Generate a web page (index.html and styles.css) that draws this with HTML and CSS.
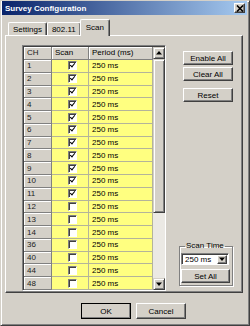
FILE: index.html
```html
<!DOCTYPE html>
<html lang="en">
<head>
  <meta charset="UTF-8" />
  <title>Survey Configuration</title>
  <link rel="stylesheet" href="styles.css">
</head>
<body>

  <div class="window">
    <div class="titlebar">
      <span>Survey Configuration</span>
      <div class="close">
        <svg width="8" height="7" viewBox="0 0 8 7"><path d="M1 0.5 L7 6.5 M7 0.5 L1 6.5" stroke="#000" stroke-width="1.6"/></svg>
      </div>
    </div>

    <div class="tabs">
      <div class="tab">Settings</div>
      <div class="tab">802.11</div>
      <div class="tab active">Scan</div>
    </div>

    <div class="panel">
      <div class="grid">
        <div class="table">
          <div class="row head"><div class="ch">CH</div><div class="sc">Scan</div><div class="pd">Period (ms)</div></div>
          <div class="row"><div class="ch">1</div><div class="sc"><span class="cb on"></span></div><div class="pd">250 ms</div></div>
          <div class="row"><div class="ch">2</div><div class="sc"><span class="cb on"></span></div><div class="pd">250 ms</div></div>
          <div class="row"><div class="ch">3</div><div class="sc"><span class="cb on"></span></div><div class="pd">250 ms</div></div>
          <div class="row"><div class="ch">4</div><div class="sc"><span class="cb on"></span></div><div class="pd">250 ms</div></div>
          <div class="row"><div class="ch">5</div><div class="sc"><span class="cb on"></span></div><div class="pd">250 ms</div></div>
          <div class="row"><div class="ch">6</div><div class="sc"><span class="cb on"></span></div><div class="pd">250 ms</div></div>
          <div class="row"><div class="ch">7</div><div class="sc"><span class="cb on"></span></div><div class="pd">250 ms</div></div>
          <div class="row"><div class="ch">8</div><div class="sc"><span class="cb on"></span></div><div class="pd">250 ms</div></div>
          <div class="row"><div class="ch">9</div><div class="sc"><span class="cb on"></span></div><div class="pd">250 ms</div></div>
          <div class="row"><div class="ch">10</div><div class="sc"><span class="cb on"></span></div><div class="pd">250 ms</div></div>
          <div class="row"><div class="ch">11</div><div class="sc"><span class="cb on"></span></div><div class="pd">250 ms</div></div>
          <div class="row"><div class="ch">12</div><div class="sc"><span class="cb"></span></div><div class="pd">250 ms</div></div>
          <div class="row"><div class="ch">13</div><div class="sc"><span class="cb"></span></div><div class="pd">250 ms</div></div>
          <div class="row"><div class="ch">14</div><div class="sc"><span class="cb"></span></div><div class="pd">250 ms</div></div>
          <div class="row"><div class="ch">36</div><div class="sc"><span class="cb"></span></div><div class="pd">250 ms</div></div>
          <div class="row"><div class="ch">40</div><div class="sc"><span class="cb"></span></div><div class="pd">250 ms</div></div>
          <div class="row"><div class="ch">44</div><div class="sc"><span class="cb"></span></div><div class="pd">250 ms</div></div>
          <div class="row"><div class="ch">48</div><div class="sc"><span class="cb"></span></div><div class="pd">250 ms</div></div>
        </div>
        <div class="scrollbar">
          <div class="sbtn"><svg width="6" height="4" viewBox="0 0 6 4"><path d="M3 0 L6 3.5 L0 3.5 Z" fill="#000"/></svg></div>
          <div class="thumb"></div>
          <div class="track"></div>
          <div class="sbtn"><svg width="6" height="4" viewBox="0 0 6 4"><path d="M0 0.5 L6 0.5 L3 4 Z" fill="#000"/></svg></div>
        </div>
      </div>

      <div class="side">
        <button class="btn">Enable All</button>
        <button class="btn">Clear All</button>
        <button class="btn reset">Reset</button>

        <fieldset class="group">
          <legend>Scan Time</legend>
          <div class="combo">
            <span>250 ms</span>
            <div class="drop"><svg width="6" height="4" viewBox="0 0 6 4"><path d="M0 0.5 L6 0.5 L3 4 Z" fill="#000"/></svg></div>
          </div>
          <button class="btn setall">Set All</button>
        </fieldset>
      </div>
    </div>

    <div class="footer">
      <button class="btn big default">OK</button>
      <button class="btn big">Cancel</button>
    </div>
  </div>

</body>
</html>
```

FILE: styles.css
```css
* {
  box-sizing: border-box;
}

html, body {
  margin: 0;
  padding: 0;
  background: #d4d0c8;
  font-family: 'Liberation Sans', Arial, sans-serif;
  font-size: 8px;
  color: #000;
}

.window {
  width: 250px;
  height: 326px;
  background: #d4d0c8;
  border: 1px solid;
  border-color: #d4d0c8 #404040 #404040 #d4d0c8;
  box-shadow: inset 1px 1px #fff, inset -1px -1px #808080;
  padding: 0 2px 2px 1px;
  display: flex;
  flex-direction: column;
}

.titlebar {
  height: 14px;
  background: linear-gradient(to right, #0a246a, #a6caf0);
  color: #fff;
  font-weight: bold;
  font-size: 8px;
  display: flex;
  align-items: center;
  justify-content: space-between;
  padding: 0 2px 0 3px;
}

.close {
  width: 11px;
  height: 10px;
  background: #d4d0c8;
  border: 1px solid;
  border-color: #fff #404040 #404040 #fff;
  box-shadow: inset -1px -1px #808080;
  display: flex;
  align-items: center;
  justify-content: center;
}

.tabs {
  display: flex;
  align-items: flex-end;
  height: 16px;
  margin: 4px 0 0 6px;
  position: relative;
  z-index: 1;
}

.tab {
  height: 13px;
  padding: 1px 4px 0;
  border: 1px solid;
  border-bottom: none;
  border-color: #fff #404040 #fff #fff;
  border-radius: 2px 2px 0 0;
  box-shadow: inset -1px 0 #808080;
  background: #d4d0c8;
  line-height: 11px;
  margin-bottom: 0;
}

.tab.active {
  height: 17px;
  margin-bottom: -1px;
  margin-left: -1px;
  padding: 2px 5px 0;
}

.panel {
  flex: none;
  height: 258px;
  margin: 0 4px 0 3px;
  border: 1px solid;
  border-color: #fff #404040 #404040 #fff;
  box-shadow: inset -1px -1px #808080;
  display: flex;
  padding: 9px 0 2px 16px;
}

.grid {
  width: 144px;
  height: 246px;
  border: 1px solid;
  border-color: #808080 #fff #fff #808080;
  box-shadow: inset 1px 1px #404040;
  padding: 1px 0 0 1px;
  display: flex;
  background: #fff;
}

.table {
  flex: 1;
  display: flex;
  flex-direction: column;
}

.row {
  display: grid;
  grid-template-columns: 28px 37px 1fr;
  height: 12.8px;
  background: #ffff80;
}

.row > div {
  border-right: 1px solid #b4b49a;
  border-bottom: 1px solid #b4b49a;
  display: flex;
  align-items: center;
  padding-left: 3px;
  overflow: hidden;
}

.row .ch {
  background: #d4d0c8;
  border-color: #808080;
  box-shadow: inset 1px 1px #fff;
  color: #222;
}

.row .sc {
  justify-content: center;
  padding-left: 4px;
}

.row.head {
  height: 13px;
}

.row.head > div {
  background: #d4d0c8;
  border-color: #808080;
  box-shadow: inset 1px 1px #fff;
  justify-content: flex-start;
  padding-left: 3px;
}

.cb {
  width: 9px;
  height: 9px;
  background: #fff;
  border: 1px solid;
  border-color: #808080 #fff #fff #808080;
  box-shadow: inset 1px 1px #404040;
  position: relative;
}

.cb.on::after {
  content: "";
  position: absolute;
  left: 2px;
  top: 0;
  width: 2px;
  height: 4px;
  border: solid #000;
  border-width: 0 1.5px 1.5px 0;
  transform: rotate(40deg);
}

.scrollbar {
  width: 12px;
  display: flex;
  flex-direction: column;
  background: #ebe9e4;
}

.sbtn, .thumb {
  background: #d4d0c8;
  border: 1px solid;
  border-color: #d4d0c8 #404040 #404040 #d4d0c8;
  box-shadow: inset 1px 1px #fff, inset -1px -1px #808080;
}

.sbtn {
  height: 12px;
  display: flex;
  align-items: center;
  justify-content: center;
}

.thumb {
  height: 154px;
}

.track {
  flex: 1;
}

.side {
  display: flex;
  flex-direction: column;
  margin-left: 13px;
  padding-top: 6px;
  width: 55px;
}

.btn {
  font-family: inherit;
  font-size: 8px;
  color: #000;
  background: #d4d0c8;
  border: 1px solid;
  border-color: #fff #404040 #404040 #fff;
  box-shadow: inset -1px -1px #808080;
  padding: 0;
  height: 14px;
  width: 50px;
  margin: 0 0 2px 4px;
}

.btn.reset {
  margin-top: 5px;
}

.group {
  margin: auto 0 4px 0;
  padding: 3px 1px 4px 1px;
  width: 54px;
  height: 44px;
  border: 1px solid #808080;
  box-shadow: inset 1px 1px #fff, 1px 1px #fff;
  display: flex;
  flex-direction: column;
}

.group legend {
  padding: 0 1px;
  margin-left: 4px;
  line-height: 8px;
}

.combo {
  height: 12px;
  width: 48px;
  background: #fff;
  border: 1px solid;
  border-color: #808080 #fff #fff #808080;
  box-shadow: inset 1px 1px #404040;
  display: flex;
  align-items: center;
  justify-content: space-between;
  padding: 1px 1px 1px 3px;
}

.drop {
  width: 10px;
  height: 9px;
  background: #d4d0c8;
  border: 1px solid;
  border-color: #fff #404040 #404040 #fff;
  box-shadow: inset -1px -1px #808080;
  display: flex;
  align-items: center;
  justify-content: center;
}

.btn.setall {
  margin: 4px 0 0 0;
  width: 49px;
  height: 14px;
}

.footer {
  display: flex;
  gap: 5px;
  padding: 10px 0 0 79px;
}

.btn.big {
  height: 16px;
  width: 50px;
  margin: 0;
}

.btn.default {
  outline: 1px solid #000;
  outline-offset: -1px;
  border-color: #fff #404040 #404040 #fff;
}
```
